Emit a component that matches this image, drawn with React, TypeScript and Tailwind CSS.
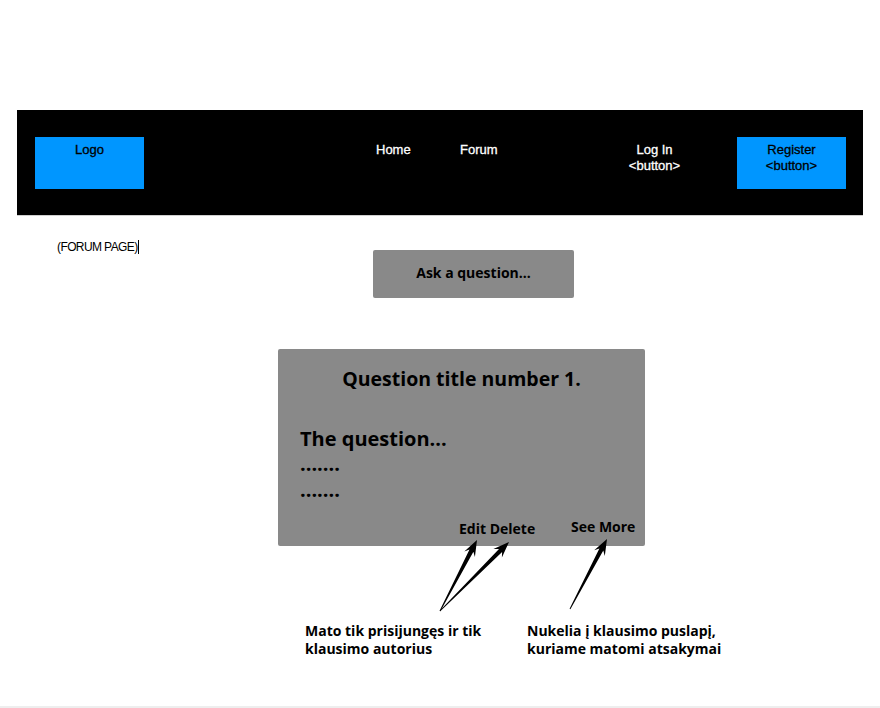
import React from "react";

type P = [number, number];

function arrowPoints(tail: P, tip: P): string {
  const dx = tip[0] - tail[0];
  const dy = tip[1] - tail[1];
  const len = Math.hypot(dx, dy);
  const ux = dx / len;
  const uy = dy / len;
  const nx = -uy;
  const ny = ux;
  const headLen = 15;
  const bx = tip[0] - ux * headLen;
  const by = tip[1] - uy * headLen;
  const pts: P[] = [
    [tail[0] + nx * 0.4, tail[1] + ny * 0.4],
    [bx + ux * 3 + nx * 2.2, by + uy * 3 + ny * 2.2],
    [bx - ux * 1 + nx * 6, by - uy * 1 + ny * 6],
    [tip[0], tip[1]],
    [bx - ux * 1 - nx * 6, by - uy * 1 - ny * 6],
    [bx + ux * 3 - nx * 2.2, by + uy * 3 - ny * 2.2],
    [tail[0] - nx * 0.4, tail[1] - ny * 0.4],
  ];
  return pts.map((p) => `${p[0].toFixed(1)},${p[1].toFixed(1)}`).join(" ");
}

const helv = { fontFamily: '"Liberation Sans", Arial, sans-serif' };
const open = { fontFamily: '"Open Sans", "Noto Sans", sans-serif' };

export default function App() {
  return (
    <div className="relative w-[880px] h-[708px] bg-white overflow-hidden">
      {/* Header */}
      <div
        className="mt-[110px] mx-[17px] h-[106px] bg-black border-b border-[#cfcfcf] flex items-start pt-[27px] text-[13px] leading-[16px] [-webkit-text-stroke:0.3px_currentColor]"
        style={helv}
      >
        <div className="ml-[18px] w-[109px] h-[52px] bg-[#0096ff] text-black text-center pt-[5px]">
          Logo
        </div>
        <div className="ml-[232px] w-[84px] pt-[5px] text-white">Home</div>
        <div className="w-[154px] pt-[5px] text-white">Forum</div>
        <div className="w-[81px] pt-[5px] text-white text-center">
          Log In
          <br />
          &lt;button&gt;
        </div>
        <div className="ml-[42px] w-[109px] h-[52px] bg-[#0096ff] text-black text-center pt-[5px]">
          Register
          <br />
          &lt;button&gt;
        </div>
      </div>

      {/* Forum page row */}
      <div className="flex items-start">
        <div className="w-[373px] pl-[57px] pt-[24px]">
          <div
            className="flex items-center h-[14px] text-[12px] leading-[14px] text-black tracking-[-0.6px]"
            style={helv}
          >
            <span>(FORUM PAGE)</span>
            <span className="w-px h-[14px] bg-black" />
          </div>
        </div>
        <div
          className="mt-[34px] w-[201px] h-[48px] bg-[#898989] rounded-[2px] flex items-center justify-center pb-[3px] text-[14px] font-bold text-black"
          style={open}
        >
          Ask a question...
        </div>
      </div>

      {/* Card */}
      <div
        className="mt-[51px] ml-[278px] w-[367px] h-[197px] bg-[#898989] rounded-[2px] flex flex-col text-black font-bold"
        style={open}
      >
        <div className="mt-[17px] text-center text-[19.5px] leading-[26px]">
          Question title number 1.
        </div>
        <div className="mt-[35px] pl-[22px] text-[20px] leading-[24px]">The question...</div>
        <div className="pl-[22px] text-[20px] leading-[26px]">.......</div>
        <div className="pl-[22px] text-[20px] leading-[26px]">.......</div>
        <div className="mt-auto mb-[8px] flex items-end text-[14px] leading-[18px]">
          <div className="ml-[181px] w-[112px]">Edit Delete</div>
          <div className="mb-[2px]">See More</div>
        </div>
      </div>

      {/* Annotations */}
      <div className="mt-[76px] ml-[305px] flex text-[14px] leading-[18px] font-bold text-black" style={open}>
        <div className="w-[222px]">
          Mato tik prisijungęs ir tik
          <br />
          klausimo autorius
        </div>
        <div>
          Nukelia į klausimo puslapį,
          <br />
          kuriame matomi atsakymai
        </div>
      </div>

      {/* Arrows overlay */}
      <svg className="absolute left-0 top-0 pointer-events-none" width={880} height={708}>
        <polygon points={arrowPoints([440, 611], [477, 540])} fill="#000" />
        <polygon points={arrowPoints([440, 611], [509, 542])} fill="#000" />
        <polygon points={arrowPoints([570, 609], [607, 539])} fill="#000" />
      </svg>

      {/* bottom edge */}
      <div className="absolute left-0 bottom-0 w-full h-[2px] bg-[#eeeeee]" />
    </div>
  );
}
